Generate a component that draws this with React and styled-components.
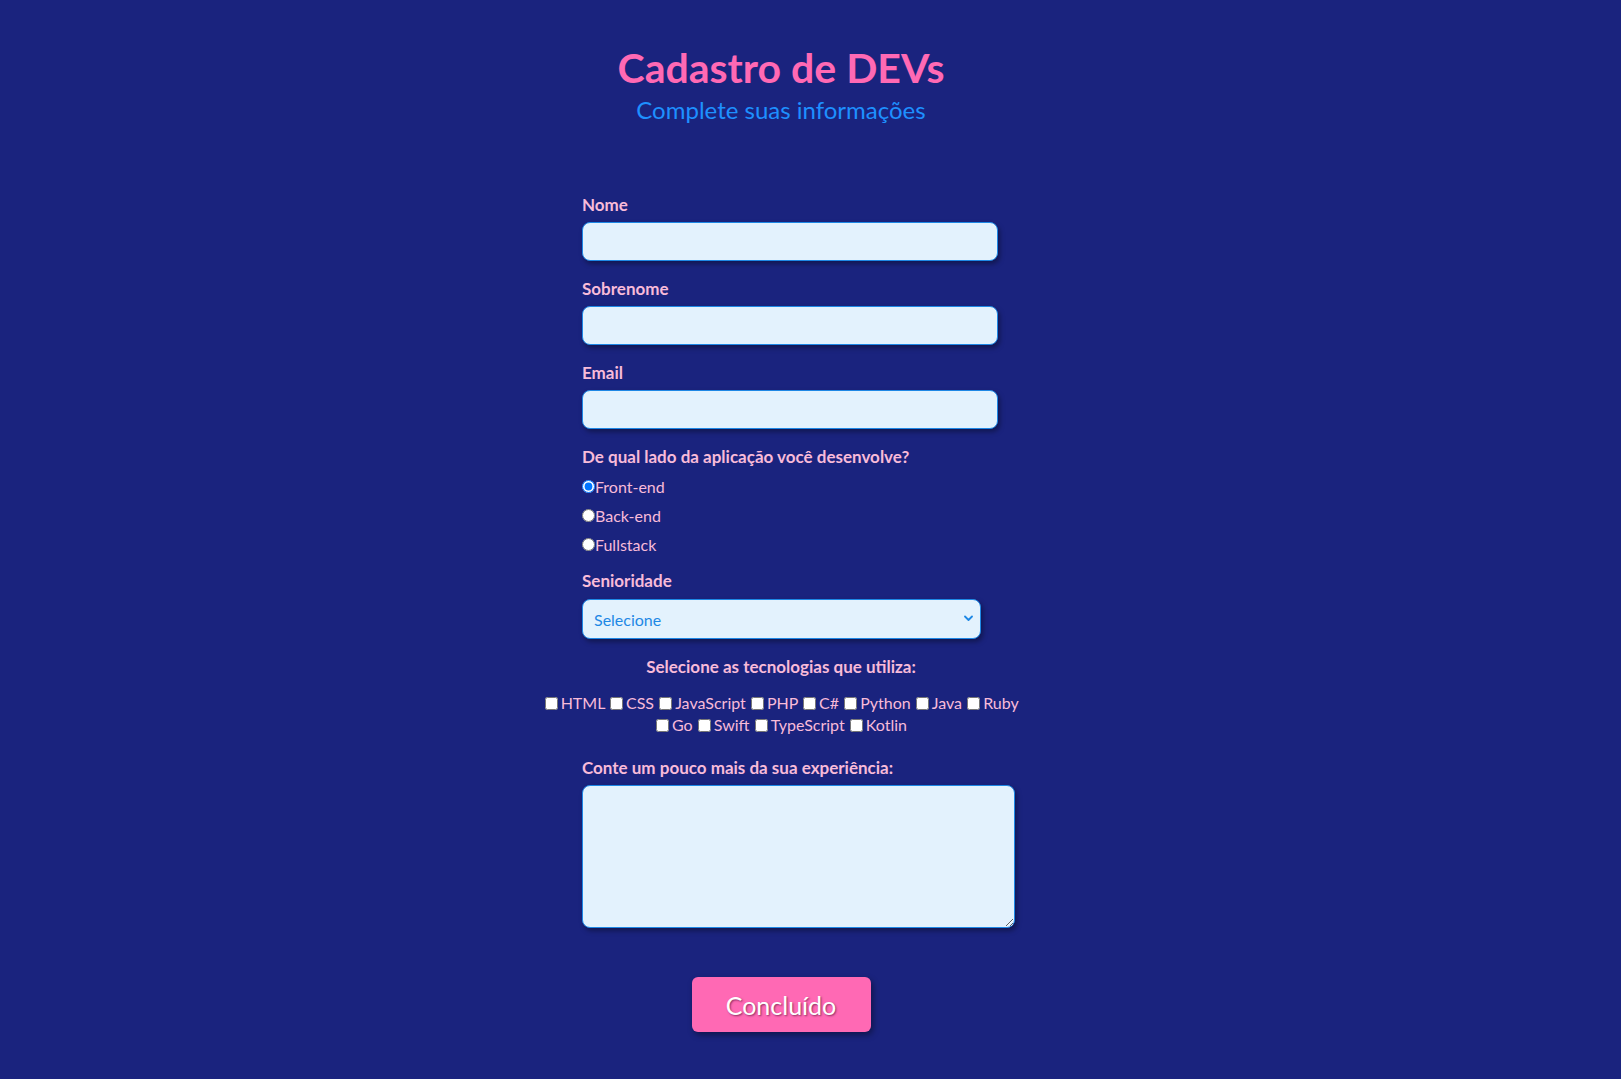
import React from "react";
import styled, { createGlobalStyle } from "styled-components";

const GlobalStyle = createGlobalStyle`
  html, body {
    margin: 0;
    padding: 0;
    background: #1a237e;
  }
  body {
    font-family: Lato, "Open Sans", sans-serif;
    min-height: 1079px;
  }
`;

const Page = styled.div`
  width: calc(100% - 59px);
  display: flex;
  flex-direction: column;
  align-items: center;
  padding-top: 44px;
  padding-bottom: 40px;
`;

const Header = styled.header`
  display: flex;
  flex-direction: column;
  align-items: center;
  margin-bottom: 70px;
`;

const Title = styled.h1`
  margin: 0;
  font-size: 41px;
  line-height: 48px;
  font-weight: 700;
  color: #ff69b4;
`;

const Subtitle = styled.p`
  margin: 3px 0 0;
  font-size: 24px;
  line-height: 30px;
  color: #1e90ff;
`;

const Form = styled.form`
  width: 398px;
  display: flex;
  flex-direction: column;
  align-items: stretch;
`;

const Field = styled.div`
  display: flex;
  flex-direction: column;
  align-items: flex-start;
  margin-bottom: ${(p) => p.$gap ?? 18}px;
`;

const Label = styled.label`
  display: block;
  font-size: 17px;
  line-height: 20px;
  font-weight: 700;
  color: #f8bbd9;
  white-space: nowrap;
  margin-bottom: ${(p) => p.$gap ?? 7}px;
  text-align: ${(p) => (p.$center ? "center" : "left")};
  align-self: ${(p) => (p.$center ? "center" : "flex-start")};
`;

const TextInput = styled.input`
  box-sizing: border-box;
  width: 416px;
  height: 39px;
  padding: 0 8px;
  border: 1px solid #1e88e5;
  border-radius: 8px;
  background: #e3f2fd;
  box-shadow: 2px 3px 5px rgba(0, 0, 0, 0.35);
  font-family: inherit;
  font-size: 16px;
  color: #1565c0;
  outline: none;
`;

const RadioGroup = styled.div`
  display: flex;
  flex-direction: column;
  margin-top: 5px;
`;

const RadioRow = styled.label`
  display: flex;
  align-items: center;
  height: 29px;
  font-size: 16px;
  color: #f8bbd9;
`;

const Radio = styled.input.attrs({ type: "radio" })`
  margin: 0;
  width: 13px;
  height: 13px;
`;

const SelectWrap = styled.div`
  position: relative;
  width: 399px;
`;

const Select = styled.select`
  box-sizing: border-box;
  width: 399px;
  height: 40px;
  padding: 0 28px 0 11px;
  appearance: none;
  -webkit-appearance: none;
  border: 1px solid #1e88e5;
  border-radius: 8px;
  background: #e3f2fd;
  box-shadow: 2px 3px 5px rgba(0, 0, 0, 0.35);
  font-family: inherit;
  font-size: 16px;
  color: #1e88e5;
  outline: none;
`;

const Chevron = styled.svg`
  position: absolute;
  right: 8px;
  top: 50%;
  margin-top: -4px;
  width: 9px;
  height: 7px;
  pointer-events: none;
`;

const TechGroup = styled.div`
  align-self: center;
  width: 480px;
  margin-top: 15px;
  margin-bottom: 22px;
  text-align: center;
  font-size: 16px;
  line-height: 22px;
  color: #f8bbd9;
`;

const TechItem = styled.label`
  white-space: nowrap;
`;

const Check = styled.input.attrs({ type: "checkbox" })`
  width: 13px;
  height: 13px;
  margin: 0 3px 0 1px;
  vertical-align: -1px;
`;

const TextArea = styled.textarea`
  box-sizing: border-box;
  width: 433px;
  height: 143px;
  padding: 8px;
  border: 1px solid #1e88e5;
  border-radius: 8px;
  background: #e3f2fd;
  box-shadow: 2px 3px 5px rgba(0, 0, 0, 0.35);
  font-family: inherit;
  font-size: 16px;
  outline: none;
`;

const Submit = styled.button`
  align-self: center;
  width: 179px;
  height: 55px;
  margin-top: 49px;
  border: none;
  border-radius: 6px;
  background: #ff69b4;
  color: #ffffff;
  font-family: inherit;
  font-size: 25px;
  text-shadow: 1px 1px 2px rgba(90, 20, 60, 0.7);
  box-shadow: 2px 3px 6px rgba(0, 0, 0, 0.4);
  cursor: pointer;
`;

const techs = [
  "HTML",
  "CSS",
  "JavaScript",
  "PHP",
  "C#",
  "Python",
  "Java",
  "Ruby",
  "Go",
  "Swift",
  "TypeScript",
  "Kotlin",
];

export default function App() {
  return (
    <>
      <GlobalStyle />
      <Page>
        <Header>
          <Title>Cadastro de DEVs</Title>
          <Subtitle>Complete suas informações</Subtitle>
        </Header>
        <Form onSubmit={(e) => e.preventDefault()}>
          <Field>
            <Label htmlFor="nome">Nome</Label>
            <TextInput id="nome" type="text" />
          </Field>
          <Field>
            <Label htmlFor="sobrenome">Sobrenome</Label>
            <TextInput id="sobrenome" type="text" />
          </Field>
          <Field>
            <Label htmlFor="email">Email</Label>
            <TextInput id="email" type="email" />
          </Field>
          <Field $gap={12}>
            <Label as="span" $gap={0}>
              De qual lado da aplicação você desenvolve?
            </Label>
            <RadioGroup>
              <RadioRow>
                <Radio name="lado" defaultChecked />
                Front-end
              </RadioRow>
              <RadioRow>
                <Radio name="lado" />
                Back-end
              </RadioRow>
              <RadioRow>
                <Radio name="lado" />
                Fullstack
              </RadioRow>
            </RadioGroup>
          </Field>
          <Field $gap={18}>
            <Label htmlFor="senioridade" $gap={8}>
              Senioridade
            </Label>
            <SelectWrap>
              <Select id="senioridade" defaultValue="">
                <option value="">Selecione</option>
                <option value="junior">Júnior</option>
                <option value="pleno">Pleno</option>
                <option value="senior">Sênior</option>
              </Select>
              <Chevron viewBox="0 0 9 7">
                <path
                  d="M1 1.5 L4.5 5 L8 1.5"
                  fill="none"
                  stroke="#1e88e5"
                  strokeWidth="1.8"
                  strokeLinecap="round"
                  strokeLinejoin="round"
                />
              </Chevron>
            </SelectWrap>
          </Field>
          <Label as="span" $center $gap={0}>
            Selecione as tecnologias que utiliza:
          </Label>
          <TechGroup>
            {techs.map((t) => (
              <React.Fragment key={t}>
                <TechItem>
                  <Check name="tech" value={t} />
                  {t}
                </TechItem>{" "}
              </React.Fragment>
            ))}
          </TechGroup>
          <Field $gap={0}>
            <Label htmlFor="exp">Conte um pouco mais da sua experiência:</Label>
            <TextArea id="exp" />
          </Field>
          <Submit type="submit">Concluído</Submit>
        </Form>
      </Page>
    </>
  );
}
